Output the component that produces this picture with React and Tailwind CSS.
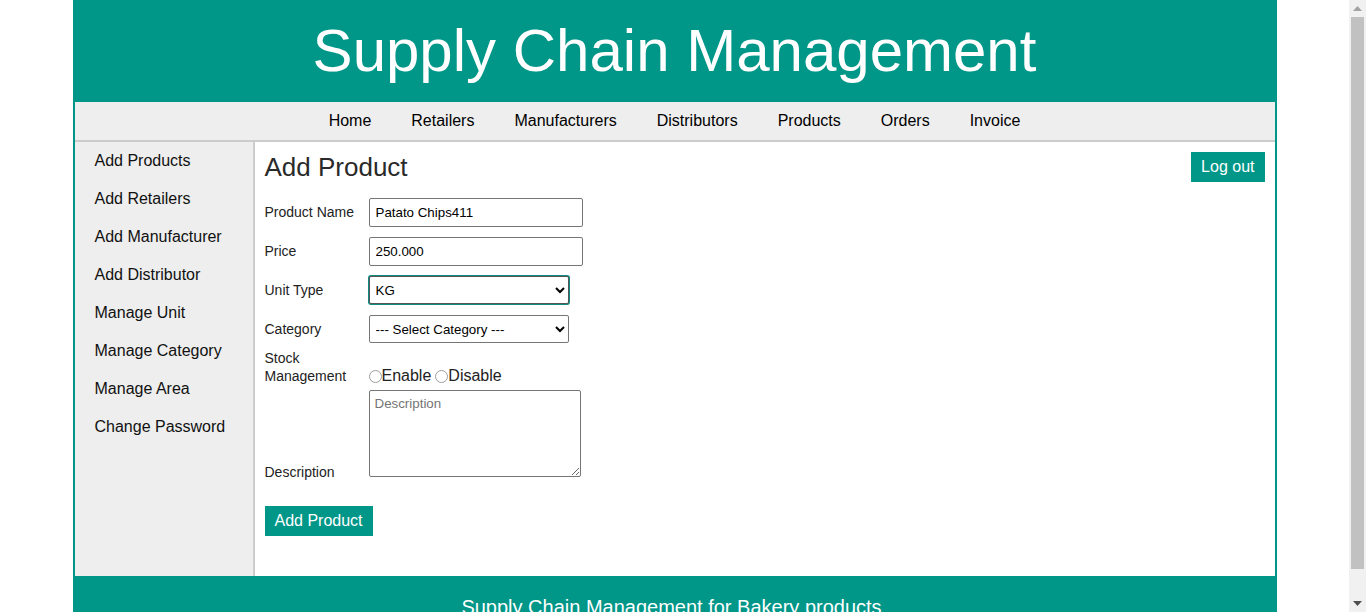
import { useState } from "react";

const navLinks = ["Home", "Retailers", "Manufacturers", "Distributors", "Products", "Orders", "Invoice"];

const sideLinks = [
  "Add Products",
  "Add Retailers",
  "Add Manufacturer",
  "Add Distributor",
  "Manage Unit",
  "Manage Category",
  "Manage Area",
  "Change Password",
];

export default function App() {
  const [form, setForm] = useState({
    name: "Patato Chips411",
    price: "250.000",
    unit: "KG",
    category: "",
    stock: "",
    description: "",
  });

  const handleChange = (e) => {
    setForm({ ...form, [e.target.name]: e.target.value });
  };

  return (
    <div className="flex items-start bg-white text-[#222]" style={{ fontFamily: '"Liberation Sans", Arial, sans-serif' }}>
      <div className="w-[1349px] shrink-0">
        <div className="w-[1204px] mx-auto border-x-2 border-[#009688]">
          {/* Header */}
          <header className="h-[102px] bg-[#009688] flex items-center justify-center">
            <h1 className="text-[60px] leading-[70px] text-white">Supply Chain Management</h1>
          </header>

          {/* Top nav */}
          <nav className="h-[40px] bg-[#eeeeee] border-b-2 border-[#cccccc] flex justify-center items-center">
            {navLinks.map((link) => (
              <a key={link} href="#" className="px-5 text-[16px] leading-[18px] text-black">
                {link}
              </a>
            ))}
          </nav>

          <div className="flex">
            {/* Sidebar */}
            <aside className="w-[180px] shrink-0 bg-[#eeeeee] border-r-2 border-[#cccccc]">
              {sideLinks.map((link) => (
                <a key={link} href="#" className="block pl-5 pt-[10px] pb-[10px] text-[16px] leading-[18px] text-[#111]">
                  {link}
                </a>
              ))}
            </aside>

            {/* Main */}
            <main className="flex-1 p-[10px] pb-[40px]">
              <div className="flex justify-between items-start">
                <h2 className="text-[26px] leading-[30px] text-[#2a2a2a]">Add Product</h2>
                <button className="h-[30px] px-[10px] bg-[#009688] text-white text-[16px]">Log out</button>
              </div>

              <form className="mt-[16px] text-[14px]" onSubmit={(e) => e.preventDefault()}>
                <div className="flex items-center">
                  <label className="w-[104px]">Product Name</label>
                  <input
                    name="name"
                    value={form.name}
                    onChange={handleChange}
                    className="w-[214px] h-[29px] px-[6px] border border-[#767676] rounded-[2px] text-[13.33px] text-black"
                  />
                </div>

                <div className="flex items-center mt-[10px]">
                  <label className="w-[104px]">Price</label>
                  <input
                    name="price"
                    value={form.price}
                    onChange={handleChange}
                    className="w-[214px] h-[29px] px-[6px] border border-[#767676] rounded-[2px] text-[13.33px] text-black"
                  />
                </div>

                <div className="flex items-center mt-[10px]">
                  <label className="w-[104px]">Unit Type</label>
                  <select
                    name="unit"
                    value={form.unit}
                    onChange={handleChange}
                    className="w-[200px] h-[28px] pl-[2px] pr-[2px] border border-[#555] rounded-[2px] ring-1 ring-[#0f8c82] bg-white text-[13.33px] text-black"
                  >
                    <option>KG</option>
                    <option>Litre</option>
                    <option>Piece</option>
                  </select>
                </div>

                <div className="flex items-center mt-[11px]">
                  <label className="w-[104px]">Category</label>
                  <select
                    name="category"
                    value={form.category}
                    onChange={handleChange}
                    className="w-[200px] h-[28px] pl-[2px] pr-[2px] border border-[#767676] rounded-[2px] bg-white text-[13.33px] text-black"
                  >
                    <option value="">--- Select Category ---</option>
                    <option value="bread">Bread</option>
                    <option value="snacks">Snacks</option>
                  </select>
                </div>

                <div className="flex items-end mt-[6px]">
                  <label className="w-[104px] leading-[18px]">
                    Stock
                    <br />
                    Management
                  </label>
                  <div className="flex items-center text-[16px] leading-[18px]">
                    <input
                      type="radio"
                      name="stock"
                      value="enable"
                      checked={form.stock === "enable"}
                      onChange={handleChange}
                      className="w-[13px] h-[13px] opacity-70"
                    />
                    <span>Enable</span>
                    <input
                      type="radio"
                      name="stock"
                      value="disable"
                      checked={form.stock === "disable"}
                      onChange={handleChange}
                      className="w-[13px] h-[13px] ml-[4px] opacity-70"
                    />
                    <span>Disable</span>
                  </div>
                </div>

                <div className="flex items-end mt-[5px]">
                  <label className="w-[104px] leading-[18px] -mb-[4px]">Description</label>
                  <textarea
                    name="description"
                    value={form.description}
                    onChange={handleChange}
                    placeholder="Description"
                    className="w-[212px] h-[87px] px-[5px] py-[3px] border border-[#767676] rounded-[2px] text-[13.33px] placeholder:text-[#757575] resize"
                  />
                </div>

                <button type="submit" className="mt-[29px] h-[30px] px-[10px] bg-[#009688] text-white text-[16px]">
                  Add Product
                </button>
              </form>
            </main>
          </div>

          {/* Footer */}
          <footer className="bg-[#009688] py-5 pr-[6px] text-center text-white text-[20px] leading-[23px]">
            Supply Chain Management for Bakery products
          </footer>
        </div>
      </div>

      {/* Browser scrollbar */}
      <div className="w-[17px] h-screen sticky top-0 shrink-0 bg-[#f1f1f1] flex flex-col items-center">
        <div className="h-[17px] flex items-center justify-center">
          <svg width="9" height="5" viewBox="0 0 9 5">
            <path d="M0 5 L4.5 0 L9 5 Z" fill="#a3a3a3" />
          </svg>
        </div>
        <div className="w-[13px] h-[552px] bg-[#c1c1c1]" />
        <div className="flex-1" />
        <div className="h-[17px] flex items-center justify-center">
          <svg width="9" height="5" viewBox="0 0 9 5">
            <path d="M0 0 L9 0 L4.5 5 Z" fill="#505050" />
          </svg>
        </div>
      </div>
    </div>
  );
}
